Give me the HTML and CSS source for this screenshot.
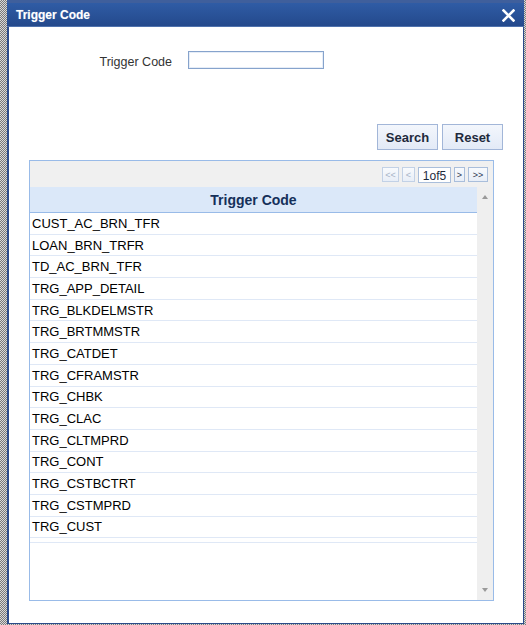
FILE: index.html
```html
<!DOCTYPE html>
<html>
<head>
<meta charset="utf-8">
<link rel="stylesheet" href="styles.css">
</head>
<body>
<div class="dialog">
  <div class="titlebar">
    <span class="title">Trigger Code</span>
    <svg class="close" width="13" height="13" viewBox="0 0 13 13"><path d="M1.5 1.5 L11.5 11.5 M11.5 1.5 L1.5 11.5" stroke="#fff" stroke-width="2.6" stroke-linecap="square"/></svg>
  </div>
  <div class="content">
    <div class="field-row">
      <label class="field-label">Trigger Code</label>
      <input class="field-input" type="text">
    </div>
    <div class="actions">
      <button class="btn">Search</button>
      <button class="btn">Reset</button>
    </div>
    <div class="grid">
      <div class="grid-toolbar">
        <div class="pager">
          <span class="pbtn dis w17">&lt;&lt;</span>
          <span class="pbtn dis w13">&lt;</span>
          <span class="pbtn page">1of5</span>
          <span class="pbtn w11">&gt;</span>
          <span class="pbtn w19">&gt;&gt;</span>
        </div>
      </div>
      <div class="grid-body">
        <div class="grid-main">
          <div class="grid-head">Trigger Code</div>
          <div class="row">CUST_AC_BRN_TFR</div>
          <div class="row">LOAN_BRN_TRFR</div>
          <div class="row">TD_AC_BRN_TFR</div>
          <div class="row">TRG_APP_DETAIL</div>
          <div class="row">TRG_BLKDELMSTR</div>
          <div class="row">TRG_BRTMMSTR</div>
          <div class="row">TRG_CATDET</div>
          <div class="row">TRG_CFRAMSTR</div>
          <div class="row">TRG_CHBK</div>
          <div class="row">TRG_CLAC</div>
          <div class="row">TRG_CLTMPRD</div>
          <div class="row">TRG_CONT</div>
          <div class="row">TRG_CSTBCTRT</div>
          <div class="row">TRG_CSTMPRD</div>
          <div class="row">TRG_CUST</div>
          <div class="row filler"></div>
        </div>
        <div class="scrollbar">
          <span class="arrow up"></span>
          <span class="arrow down"></span>
        </div>
      </div>
    </div>
  </div>
</div>
</body>
</html>
```
FILE: styles.css
```css
html, body {
  margin: 0;
  padding: 0;
}
body {
  width: 526px;
  height: 625px;
  overflow: hidden;
  background: repeating-conic-gradient(#7a7a7a 0% 25%, #d8d8d8 0% 50%) 0 0 / 2px 2px;
  font-family: "Liberation Sans", Arial, sans-serif;
}
.dialog {
  box-sizing: border-box;
  margin-left: 7px;
  width: 517px;
  height: 624px;
  background: #fff;
  border-left: 2px solid #2b4b8a;
  border-right: 1px solid #2b4b8a;
  border-bottom: 1px solid #2b4b8a;
  display: flex;
  flex-direction: column;
}
.titlebar {
  box-sizing: border-box;
  height: 27px;
  margin-left: -2px;
  margin-right: -1px;
  border-top: 3px solid #3f5f9c;
  border-bottom: 1px solid #4f72ad;
  background: linear-gradient(#2f5ca5, #24498c);
  display: flex;
  align-items: center;
  justify-content: space-between;
  padding: 0 9px 0 9px;
}
.title {
  color: #fff;
  font-weight: bold;
  font-size: 12px;
  text-shadow: 0 0 1px rgba(255,255,255,0.4);
}
.close {
  display: block;
  margin-top: 1px;
}
.content {
  flex: 1;
  display: flex;
  flex-direction: column;
}
.field-row {
  display: flex;
  align-items: flex-start;
  padding-top: 24px;
  padding-left: 84px;
  gap: 16px;
}
.field-label {
  width: 79px;
  text-align: right;
  font-size: 12.5px;
  line-height: 15px;
  padding-top: 4px;
  color: #333;
}
.field-input {
  box-sizing: border-box;
  width: 136px;
  height: 18px;
  margin: 0;
  padding: 0;
  border: 1px solid #86a3cc;
  background: #fff;
  box-shadow: inset 0 0 0 1px #e6edf7;
}
.actions {
  display: flex;
  justify-content: flex-end;
  gap: 4px;
  padding-right: 20px;
  margin-top: 54px;
}
.btn {
  box-sizing: border-box;
  width: 61px;
  height: 26px;
  margin: 0;
  padding: 0;
  border: 1px solid #a2b6d8;
  background: linear-gradient(#f3f6fc, #e3eaf7);
  font-family: "Liberation Sans", Arial, sans-serif;
  font-weight: bold;
  font-size: 13px;
  color: #1e2a3c;
}
.grid {
  box-sizing: border-box;
  margin-top: 10px;
  margin-left: 20px;
  width: 465px;
  height: 441px;
  border: 1px solid #99bbe8;
  display: flex;
  flex-direction: column;
}
.grid-toolbar {
  height: 26px;
  background: #f0f0f0;
  display: flex;
  justify-content: flex-end;
  padding-right: 5px;
}
.pager {
  display: flex;
  gap: 3px;
  padding-top: 6px;
}
.pbtn {
  box-sizing: border-box;
  height: 15px;
  border: 1px solid #a9bedb;
  background: linear-gradient(#f8fafd, #e8eef7);
  font-size: 9px;
  color: #2a3550;
  display: flex;
  align-items: center;
  justify-content: center;
}
.pbtn.dis {
  color: #a8b4c8;
  border-color: #c2d1e6;
}
.w17 { width: 17px; }
.w13 { width: 13px; }
.w11 { width: 11px; }
.w19 { width: 20px; }
.pbtn.page {
  width: 33px;
  height: 16px;
  background: #fff;
  font-size: 12px;
  line-height: 14px;
  padding-top: 1px;
  color: #1e2a3c;
}
.grid-body {
  flex: 1;
  display: flex;
  min-height: 0;
}
.grid-main {
  flex: 1;
  display: flex;
  flex-direction: column;
}
.grid-head {
  box-sizing: border-box;
  height: 26px;
  background: #dbe8f9;
  border-bottom: 1px solid #99bbe8;
  display: flex;
  align-items: center;
  justify-content: center;
  font-weight: bold;
  font-size: 14px;
  color: #15305a;
}
.row {
  box-sizing: border-box;
  height: 21.7px;
  border-bottom: 1px solid #dfe8f6;
  display: flex;
  align-items: center;
  padding-left: 2px;
  font-size: 13px;
  color: #000;
}
.row.filler {
  height: 4.5px;
}
.scrollbar {
  width: 16px;
  background: #efefef;
  display: flex;
  flex-direction: column;
  justify-content: space-between;
  align-items: center;
  padding: 8px 0 8px;
  box-sizing: border-box;
}
.arrow {
  width: 0;
  height: 0;
  border-left: 3.5px solid transparent;
  border-right: 3.5px solid transparent;
}
.arrow.up {
  border-bottom: 4px solid #9a9a9a;
}
.arrow.down {
  border-top: 4px solid #9a9a9a;
}
```
